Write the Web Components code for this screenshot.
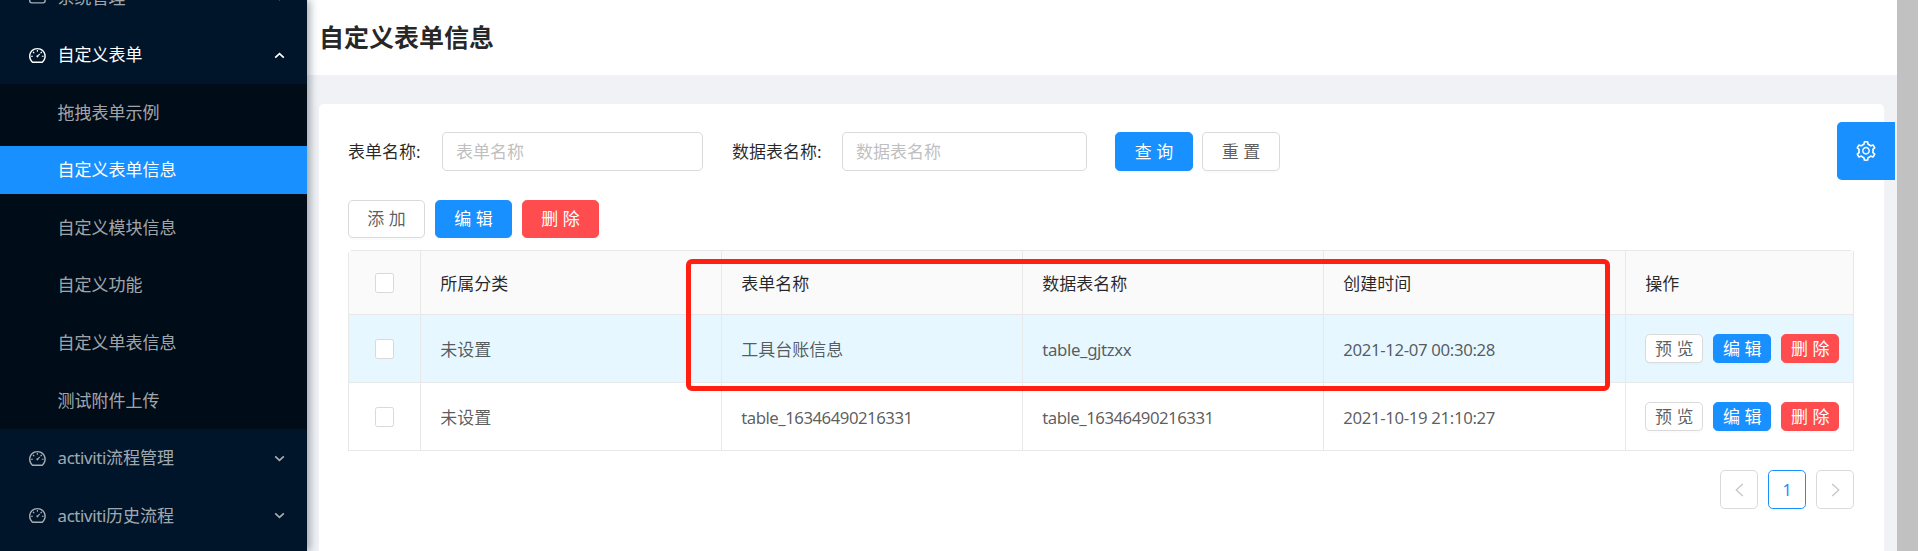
<!DOCTYPE html>
<html lang="zh">
<head>
<meta charset="utf-8">
<title>自定义表单信息</title>
<style>
  html, body { margin: 0; height: 551px; overflow: hidden; background: #f0f2f5; }
  body { font: 17px/1.5 "Noto Sans", "Noto Sans CJK SC", sans-serif; color: rgba(0,0,0,.65); }
  .lat { font-size: 16.8px; letter-spacing: -.35px; }
</style>
</head>
<body>
<admin-layout>
  <side-menu slot="sider">
    <menu-title icon="system">系统管理</menu-title>
    <menu-title open>自定义表单</menu-title>
    <sub-menu>
      <menu-leaf>拖拽表单示例</menu-leaf>
      <menu-leaf active>自定义表单信息</menu-leaf>
      <menu-leaf>自定义模块信息</menu-leaf>
      <menu-leaf>自定义功能</menu-leaf>
      <menu-leaf>自定义单表信息</menu-leaf>
      <menu-leaf>测试附件上传</menu-leaf>
    </sub-menu>
    <menu-title><span class="lat">activiti</span>流程管理</menu-title>
    <menu-title><span class="lat">activiti</span>历史流程</menu-title>
  </side-menu>
  <page-header slot="header">自定义表单信息</page-header>
  <form-table-card></form-table-card>
  <settings-handle slot="overlay"></settings-handle>
</admin-layout>

<script>
const ICONS = {
  dashboard: `<path d="M924.8 385.6a446.7 446.7 0 0 0-96-142.4 446.7 446.7 0 0 0-142.4-96C631.1 123.8 572.5 112 512 112s-119.1 11.8-174.4 35.2a446.7 446.7 0 0 0-142.4 96 446.7 446.7 0 0 0-96 142.4C75.8 440.9 64 499.5 64 560c0 132.7 58.3 257.7 159.9 343.1l1.7 1.4c5.8 4.8 13.1 7.5 20.6 7.5h531.7c7.5 0 14.8-2.7 20.6-7.5l1.7-1.4C901.7 817.7 960 692.7 960 560c0-60.5-11.9-119.1-35.2-174.4zM761.4 836H262.6A371.12 371.12 0 0 1 140 560c0-99.4 38.7-192.8 109-263 70.3-70.3 163.7-109 263-109 99.4 0 192.8 38.7 263 109 70.3 70.3 109 163.7 109 263 0 105.6-44.5 205.5-122.6 276z"/><path d="M623.5 421.5a8.03 8.03 0 0 0-11.3 0L527.7 506c-18.7-5-39.4-.2-54.1 14.5a55.95 55.95 0 0 0 0 79.2 55.95 55.95 0 0 0 79.2 0 55.87 55.87 0 0 0 14.5-54.1l84.5-84.5c3.1-3.1 3.1-8.2 0-11.3l-28.3-28.3zM490 320h44c4.4 0 8-3.6 8-8v-80c0-4.4-3.6-8-8-8h-44c-4.4 0-8 3.6-8 8v80c0 4.4 3.6 8 8 8zM750 538v44c0 4.4 3.6 8 8 8h80c4.4 0 8-3.6 8-8v-44c0-4.4-3.6-8-8-8h-80c-4.4 0-8 3.6-8 8zM762.7 340.8l-31.1-31.1a8.03 8.03 0 0 0-11.3 0l-56.6 56.6a8.03 8.03 0 0 0 0 11.3l31.1 31.1c3.1 3.1 8.2 3.1 11.3 0l56.6-56.6c3.1-3.1 3.1-8.2 0-11.3zM304.1 309.7a8.03 8.03 0 0 0-11.3 0l-31.1 31.1a8.03 8.03 0 0 0 0 11.3l56.6 56.6c3.1 3.1 8.2 3.1 11.3 0l31.1-31.1c3.1-3.1 3.1-8.2 0-11.3l-56.6-56.6zM262 530h-80c-4.4 0-8 3.6-8 8v44c0 4.4 3.6 8 8 8h80c4.4 0 8-3.6 8-8v-44c0-4.4-3.6-8-8-8z"/>`,
  // only the rounded bottom of this one is in view
  system: `<path fill-rule="evenodd" d="M210 100h604a146 146 0 0 1 146 146v450a146 146 0 0 1-146 146H210A146 146 0 0 1 64 696V246a146 146 0 0 1 146-146zm0 76a70 70 0 0 0-70 70v450a70 70 0 0 0 70 70h604a70 70 0 0 0 70-70V246a70 70 0 0 0-70-70z"/>`,
  setting: `<path d="M924.8 625.7l-65.5-56c3.1-19 4.7-38.4 4.7-57.8s-1.6-38.8-4.7-57.8l65.5-56a32.03 32.03 0 0 0 9.3-35.2l-.9-2.6a443.74 443.74 0 0 0-79.7-137.9l-1.8-2.1a32.12 32.12 0 0 0-35.1-9.5l-81.3 28.9c-30-24.6-63.5-44-99.7-57.6l-15.7-85a32.05 32.05 0 0 0-25.8-25.7l-2.7-.5c-52.1-9.4-106.9-9.4-159 0l-2.7.5a32.05 32.05 0 0 0-25.8 25.7l-15.8 85.4a351.86 351.86 0 0 0-99 57.4l-81.9-29.1a32 32 0 0 0-35.1 9.5l-1.8 2.1a446.02 446.02 0 0 0-79.7 137.9l-.9 2.6c-4.5 12.5-.8 26.5 9.3 35.2l66.3 56.6c-3.1 18.8-4.6 38-4.6 57.1 0 19.2 1.5 38.4 4.6 57.1L99 625.5a32.03 32.03 0 0 0-9.3 35.2l.9 2.6c18.1 50.4 44.9 96.9 79.7 137.9l1.8 2.1a32.12 32.12 0 0 0 35.1 9.5l81.9-29.1c29.8 24.5 63.1 43.9 99 57.4l15.8 85.4a32.05 32.05 0 0 0 25.8 25.7l2.7.5a449.4 449.4 0 0 0 159 0l2.7-.5a32.05 32.05 0 0 0 25.8-25.7l15.7-85a350 350 0 0 0 99.7-57.6l81.3 28.9a32 32 0 0 0 35.1-9.5l1.8-2.1c34.8-41.1 61.6-87.5 79.7-137.9l.9-2.6c4.5-12.3.8-26.3-9.3-35zM788.3 465.9c2.5 15.1 3.8 30.6 3.8 46.1s-1.3 31-3.8 46.1l-6.6 40.1 74.7 63.9a370.03 370.03 0 0 1-42.6 73.6L721 702.8l-31.4 25.8c-23.9 19.6-50.5 35-79.3 45.8l-38.1 14.3-17.9 97a377.5 377.5 0 0 1-85 0l-17.9-97.2-37.8-14.5c-28.5-10.8-55-26.2-78.7-45.7l-31.4-25.9-93.4 33.2c-17-22.9-31.2-47.6-42.6-73.6l75.5-64.5-6.5-40c-2.4-14.9-3.7-30.3-3.7-45.5 0-15.3 1.2-30.6 3.7-45.5l6.5-40-75.5-64.5c11.3-26.1 25.6-50.7 42.6-73.6l93.4 33.2 31.4-25.9c23.7-19.5 50.2-34.9 78.7-45.7l37.9-14.3 17.9-97.2c28.1-3.2 56.8-3.2 85 0l17.9 97 38.1 14.3c28.7 10.8 55.4 26.2 79.3 45.8l31.4 25.8 92.8-32.9c17 22.9 31.2 47.6 42.6 73.6L781.8 426l6.5 39.9zM512 326c-97.2 0-176 78.8-176 176s78.8 176 176 176 176-78.8 176-176-78.8-176-176-176zm79.2 255.2A111.6 111.6 0 0 1 512 614c-29.9 0-58-11.7-79.2-32.8A111.6 111.6 0 0 1 400 502c0-29.9 11.7-58 32.8-79.2C454 401.6 482.1 390 512 390c29.9 0 58 11.6 79.2 32.8A111.6 111.6 0 0 1 624 502c0 29.9-11.7 58-32.8 79.2z"/>`
};

const icon = (name, size) =>
  `<svg viewBox="64 64 896 896" width="${size}" height="${size}" fill="currentColor" aria-hidden="true">${ICONS[name]}</svg>`;

class AdminLayout extends HTMLElement {
  constructor() {
    super();
    this.attachShadow({ mode: 'open' });
    this.shadowRoot.innerHTML = `
      <style>
        :host { display: flex; height: 551px; overflow: hidden; }
        .main { position: relative; flex: 1; min-width: 0; overflow: hidden; }
        .content { padding: 29px 13px 0 12px; }
        .scrollbar { width: 21px; background: #c1c1c1; border-right: 1px solid #fff; }
      </style>
      <slot name="sider"></slot>
      <div class="main">
        <slot name="header"></slot>
        <div class="content"><slot></slot></div>
        <slot name="overlay"></slot>
      </div>
      <div class="scrollbar"></div>
    `;
  }
}

class SideMenu extends HTMLElement {
  constructor() {
    super();
    this.attachShadow({ mode: 'open' });
    // the original list is scrolled by a little, first row is cut off
    this.shadowRoot.innerHTML = `
      <style>
        :host {
          display: block;
          position: relative;
          z-index: 2;
          flex: 0 0 307px;
          background: #001529;
          box-shadow: 3px 0 8px rgba(0,21,41,.35);
        }
        .inner { height: 551px; overflow: hidden; }
        .list { display: flex; flex-direction: column; margin-top: -31.4px; }
      </style>
      <div class="inner"><div class="list"><slot></slot></div></div>
    `;
  }
}

class MenuTitle extends HTMLElement {
  constructor() {
    super();
    this.attachShadow({ mode: 'open' });
  }

  connectedCallback() {
    const open = this.hasAttribute('open');
    const name = this.getAttribute('icon') || 'dashboard';
    this.shadowRoot.innerHTML = `
      <style>
        :host {
          display: flex;
          align-items: center;
          flex: none;
          height: 48px;
          margin: 4.8px 0;
          padding-left: 28.8px;
          color: ${open ? '#fff' : 'rgba(255,255,255,.65)'};
        }
        svg.ico { flex: none; margin-right: 12px; }
        .txt { flex: 1; white-space: nowrap; }
        .arrow { flex: none; margin-right: 22px; }
      </style>
      ${icon(name, 16.8).replace('<svg', '<svg class="ico"')}
      <span class="txt"><slot></slot></span>
      <svg class="arrow" width="11" height="7" viewBox="0 0 11 7" fill="none" stroke="currentColor" stroke-width="1.7">
        <path d="${open ? 'M1.2 5.6 5.5 1.6 9.8 5.6' : 'M1.2 1.4 5.5 5.4 9.8 1.4'}"/>
      </svg>
    `;
  }
}

class SubMenu extends HTMLElement {
  constructor() {
    super();
    this.attachShadow({ mode: 'open' });
    this.shadowRoot.innerHTML = `
      <style>
        :host { display: flex; flex-direction: column; padding: 4.8px 0; background: #000c17; }
      </style>
      <slot></slot>
    `;
  }
}

class MenuLeaf extends HTMLElement {
  constructor() {
    super();
    this.attachShadow({ mode: 'open' });
    this.shadowRoot.innerHTML = `
      <style>
        :host {
          display: block;
          flex: none;
          height: 48px;
          line-height: 48px;
          padding-left: 57.6px;
          color: rgba(255,255,255,.65);
        }
        :host(:not(:last-child)) { margin-bottom: 9.6px; }
        :host([active]) { background: #1890ff; color: #fff; }
      </style>
      <slot></slot>
    `;
  }
}

class PageHeader extends HTMLElement {
  constructor() {
    super();
    this.attachShadow({ mode: 'open' });
    this.shadowRoot.innerHTML = `
      <style>
        :host {
          display: flex;
          align-items: center;
          height: 75px;
          padding-left: 12px;
          background: #fff;
          color: rgba(0,0,0,.85);
          font-size: 25px;
          font-weight: 700;
        }
      </style>
      <slot></slot>
    `;
  }
}

class AntBtn extends HTMLElement {
  constructor() {
    super();
    this.attachShadow({ mode: 'open' });
    this.shadowRoot.innerHTML = `
      <style>
        :host {
          display: inline-flex;
          align-items: center;
          justify-content: center;
          box-sizing: border-box;
          width: 77px;
          height: 38px;
          border: 1px solid #d9d9d9;
          border-radius: 4.8px;
          background: #fff;
          color: rgba(0,0,0,.65);
          white-space: nowrap;
          box-shadow: 0 2px 0 rgba(0,0,0,.015);
        }
        :host([small]) { width: 58px; height: 29px; }
        :host([tall]) { width: 78px; height: 39px; }
        :host([type=primary]) { background: #1890ff; border-color: #1890ff; color: #fff; }
        :host([type=danger]) { background: #ff4d4f; border-color: #ff4d4f; color: #fff; }
      </style>
      <slot></slot>
    `;
  }
}

class FormField extends HTMLElement {
  constructor() {
    super();
    this.attachShadow({ mode: 'open' });
  }

  connectedCallback() {
    this.shadowRoot.innerHTML = `
      <style>
        :host { display: flex; align-items: center; }
        label { width: ${this.getAttribute('label-width')}px; color: rgba(0,0,0,.85); white-space: nowrap; }
        .input {
          box-sizing: border-box;
          width: ${this.getAttribute('input-width')}px;
          height: 39px;
          padding: 0 13px;
          border: 1px solid #d9d9d9;
          border-radius: 4.8px;
          background: #fff;
          color: #bfbfbf;
          line-height: 37px;
        }
      </style>
      <label>${this.getAttribute('label')}:</label>
      <div class="input">${this.getAttribute('placeholder')}</div>
    `;
  }
}

class CheckMark extends HTMLElement {
  constructor() {
    super();
    this.attachShadow({ mode: 'open' });
    this.shadowRoot.innerHTML = `
      <style>
        :host {
          display: block;
          box-sizing: border-box;
          width: 19px;
          height: 20px;
          margin: 0 auto;
          border: 1px solid #d9d9d9;
          border-radius: 2.4px;
          background: #fff;
        }
      </style>
    `;
  }
}

class DataTable extends HTMLElement {
  constructor() {
    super();
    this.attachShadow({ mode: 'open' });
  }

  set rows(data) {
    const body = data.map((r) => `
      <tr class="${r.selected ? 'sel' : ''}">
        <td class="c"><check-mark></check-mark></td>
        <td>${r.cat}</td>
        <td class="${r.formClass || ''}">${r.form}</td>
        <td class="${r.tableClass}">${r.table}</td>
        <td class="lat">${r.time}</td>
        <td class="ops">
          <div class="acts">
            <ant-btn small>预 览</ant-btn>
            <ant-btn small type="primary">编 辑</ant-btn>
            <ant-btn small type="danger">删 除</ant-btn>
          </div>
        </td>
      </tr>`).join('');

    this.shadowRoot.innerHTML = `
      <style>
        :host { display: block; position: relative; }
        .wrap {
          border: 1px solid #e8e8e8;
          border-width: 1px 0 0 1px;
          border-radius: 4.8px 4.8px 0 0;
        }
        table { width: 1505px; table-layout: fixed; border-collapse: separate; border-spacing: 0; }
        th, td {
          padding: 2px 0 0 19.2px;
          border-right: 1px solid #e8e8e8;
          border-bottom: 1px solid #e8e8e8;
          text-align: left;
          font-weight: 400;
        }
        th { height: 61px; background: #fafafa; color: rgba(0,0,0,.85); }
        td { height: 65px; background: #fff; }
        th.c, td.c { padding: 0; }
        td.ops { padding-top: 0; }
        tr.sel td { background: #e6f7ff; }
        .lat { font-size: 16.8px; letter-spacing: -.35px; }
        .tight { font-size: 16.8px; letter-spacing: -.5px; }
        .acts { display: flex; gap: 10px; }
        .mark {
          position: absolute;
          left: 338px;
          top: 9px;
          box-sizing: border-box;
          width: 924px;
          height: 132px;
          border: 5px solid #ff2012;
          border-radius: 6px;
        }
      </style>
      <div class="wrap">
        <table>
          <colgroup><col width="72"><col width="301"><col width="301"><col width="301"><col width="302"><col width="228"></colgroup>
          <thead>
            <tr>
              <th class="c"><check-mark></check-mark></th>
              <th>所属分类</th><th>表单名称</th><th>数据表名称</th><th>创建时间</th><th>操作</th>
            </tr>
          </thead>
          <tbody>${body}</tbody>
        </table>
      </div>
      <div class="mark"></div>
    `;
  }
}

class PagerBar extends HTMLElement {
  constructor() {
    super();
    this.attachShadow({ mode: 'open' });
    this.shadowRoot.innerHTML = `
      <style>
        :host { display: flex; justify-content: flex-end; gap: 10px; margin-top: 19px; }
        .p {
          display: flex;
          align-items: center;
          justify-content: center;
          box-sizing: border-box;
          width: 38px;
          height: 39px;
          border: 1px solid #d9d9d9;
          border-radius: 4.8px;
          color: #c4c4c4;
        }
        .on { border-color: #1890ff; color: #1890ff; font-size: 16px; }
      </style>
      <div class="p"><svg width="9" height="14" viewBox="0 0 9 14" fill="none" stroke="currentColor" stroke-width="1.2"><path d="M7.8 1 1.2 7l6.6 6"/></svg></div>
      <div class="p on">1</div>
      <div class="p"><svg width="9" height="14" viewBox="0 0 9 14" fill="none" stroke="currentColor" stroke-width="1.2"><path d="M1.2 1l6.6 6-6.6 6"/></svg></div>
    `;
  }
}

class FormTableCard extends HTMLElement {
  constructor() {
    super();
    this.attachShadow({ mode: 'open' });
    this.shadowRoot.innerHTML = `
      <style>
        :host {
          display: block;
          padding: 28px 30px 60px 29px;
          background: #fff;
          border-radius: 4.8px;
        }
        .query { display: flex; align-items: center; gap: 29px; }
        .btns { display: flex; gap: 9px; margin-left: -1px; }
        .tools { display: flex; gap: 10px; margin: 29px 0 12px; }
      </style>
      <div class="query">
        <form-field label="表单名称" placeholder="表单名称" label-width="94" input-width="261"></form-field>
        <form-field label="数据表名称" placeholder="数据表名称" label-width="110" input-width="245"></form-field>
        <div class="btns">
          <ant-btn tall type="primary">查 询</ant-btn>
          <ant-btn tall>重 置</ant-btn>
        </div>
      </div>
      <div class="tools">
        <ant-btn>添 加</ant-btn>
        <ant-btn type="primary">编 辑</ant-btn>
        <ant-btn type="danger">删 除</ant-btn>
      </div>
      <data-table></data-table>
      <pager-bar></pager-bar>
    `;
  }

  connectedCallback() {
    this.shadowRoot.querySelector('data-table').rows = [
      { selected: true, cat: '未设置', form: '工具台账信息', tableClass: 'lat', table: 'table_gjtzxx', time: '2021-12-07 00:30:28' },
      { cat: '未设置', formClass: 'tight', form: 'table_16346490216331', tableClass: 'tight', table: 'table_16346490216331', time: '2021-10-19 21:10:27' }
    ];
  }
}

class SettingsHandle extends HTMLElement {
  constructor() {
    super();
    this.attachShadow({ mode: 'open' });
    this.shadowRoot.innerHTML = `
      <style>
        :host {
          position: absolute;
          top: 122px;
          right: 2px;
          display: flex;
          align-items: center;
          justify-content: center;
          width: 58px;
          height: 58px;
          border-radius: 4.8px 0 0 4.8px;
          background: #1890ff;
          color: #fff;
        }
      </style>
      ${icon('setting', 20)}
    `;
  }
}

customElements.define('check-mark', CheckMark);
customElements.define('ant-btn', AntBtn);
customElements.define('menu-title', MenuTitle);
customElements.define('menu-leaf', MenuLeaf);
customElements.define('sub-menu', SubMenu);
customElements.define('side-menu', SideMenu);
customElements.define('page-header', PageHeader);
customElements.define('form-field', FormField);
customElements.define('data-table', DataTable);
customElements.define('pager-bar', PagerBar);
customElements.define('form-table-card', FormTableCard);
customElements.define('settings-handle', SettingsHandle);
customElements.define('admin-layout', AdminLayout);
</script>
</body>
</html>
